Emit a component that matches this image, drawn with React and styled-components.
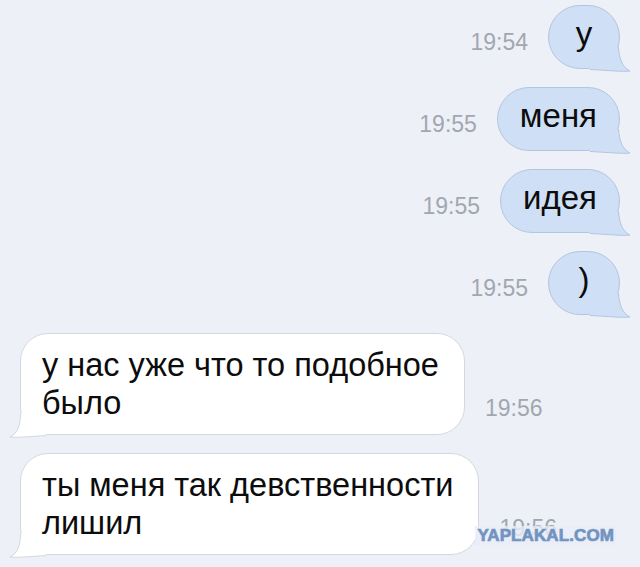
import React from 'react';
import styled, { createGlobalStyle } from 'styled-components';

const GlobalStyle = createGlobalStyle`
  html, body {
    margin: 0;
    padding: 0;
    background: #edf1f7;
  }
  body {
    font-family: "Liberation Sans", Arial, sans-serif;
  }
`;

const Page = styled.div`
  position: relative;
  width: 640px;
  min-height: 567px;
  box-sizing: border-box;
  padding: 5px 20px 0 20px;
  display: flex;
  flex-direction: column;
  gap: 18px;
  overflow: hidden;
`;

const Row = styled.div`
  display: flex;
  align-items: flex-end;
  gap: 20px;
  justify-content: ${(p) => (p.$out ? 'flex-end' : 'flex-start')};
`;

const Bubble = styled.div`
  position: relative;
  box-sizing: border-box;
  min-width: 72px;
  padding: ${(p) => (p.$out ? '9px 22px 15px' : '12px 25px 12px 21px')};
  border-radius: ${(p) => (p.$out ? '32px' : '28px')};
  background: ${(p) => (p.$out ? '#cfe0f6' : '#ffffff')};
  border: 1px solid ${(p) => (p.$out ? '#b3c6df' : '#d3d8e0')};
  color: #0c0c0c;
  font-size: ${(p) => (p.$out ? '33px' : '32.5px')};
  line-height: 38px;
  text-align: ${(p) => (p.$out ? 'center' : 'left')};
  white-space: nowrap;
`;

const TailSvg = styled.svg`
  position: absolute;
  bottom: -5px;
  ${(p) => (p.$out ? 'right: -13px;' : 'left: -13px; transform: scaleX(-1);')}
  overflow: visible;
`;

const Time = styled.div`
  font-size: 23px;
  line-height: 23px;
  color: #a2a7af;
  margin-bottom: 15px;
  white-space: nowrap;
`;

const Watermark = styled.div`
  position: absolute;
  right: 24px;
  top: 526px;
  padding: 1px 2px;
  background: rgba(232, 238, 247, 0.8);
  color: #7294c0;
  font-family: "Liberation Sans", Arial, sans-serif;
  font-weight: 700;
  font-size: 17px;
  line-height: 17px;
  letter-spacing: 0.1px;
  -webkit-text-stroke: 0.7px #7294c0;
`;

const Tail = ({ out, r }) => {
  const sx = 28 - r + Math.sqrt(r * r - (r - 22) * (r - 22));
  const ex = 28 - r + 2;
  const fill = out ? '#cfe0f6' : '#ffffff';
  const stroke = out ? '#b3c6df' : '#d3d8e0';
  const edge = `M${sx} 2 C27.5 14, 30 22, 38 26 C31 27, 17 25.4, ${ex} 24.5`;
  return (
    <TailSvg $out={out} width="40" height="28" viewBox="0 0 40 28">
      <path d={`${edge} L${ex} 10 Z`} fill={fill} />
      <path d={edge} fill="none" stroke={stroke} strokeWidth="1" />
    </TailSvg>
  );
};

const Outgoing = ({ time, text }) => (
  <Row $out>
    <Time>{time}</Time>
    <Bubble $out>
      {text}
      <Tail out r={32} />
    </Bubble>
  </Row>
);

const Incoming = ({ time, lines }) => (
  <Row>
    <Bubble>
      {lines.map((l, i) => (
        <div key={i}>{l}</div>
      ))}
      <Tail r={28} />
    </Bubble>
    <Time>{time}</Time>
  </Row>
);

const App = () => (
  <>
    <GlobalStyle />
    <Page>
      <Outgoing time="19:54" text="у" />
      <Outgoing time="19:55" text="меня" />
      <Outgoing time="19:55" text="идея" />
      <Outgoing time="19:55" text=")" />
      <Incoming time="19:56" lines={['у нас уже что то подобное', 'было']} />
      <Incoming time="19:56" lines={['ты меня так девственности', 'лишил']} />
      <Watermark>YAPLAKAL.COM</Watermark>
    </Page>
  </>
);

export default App;
